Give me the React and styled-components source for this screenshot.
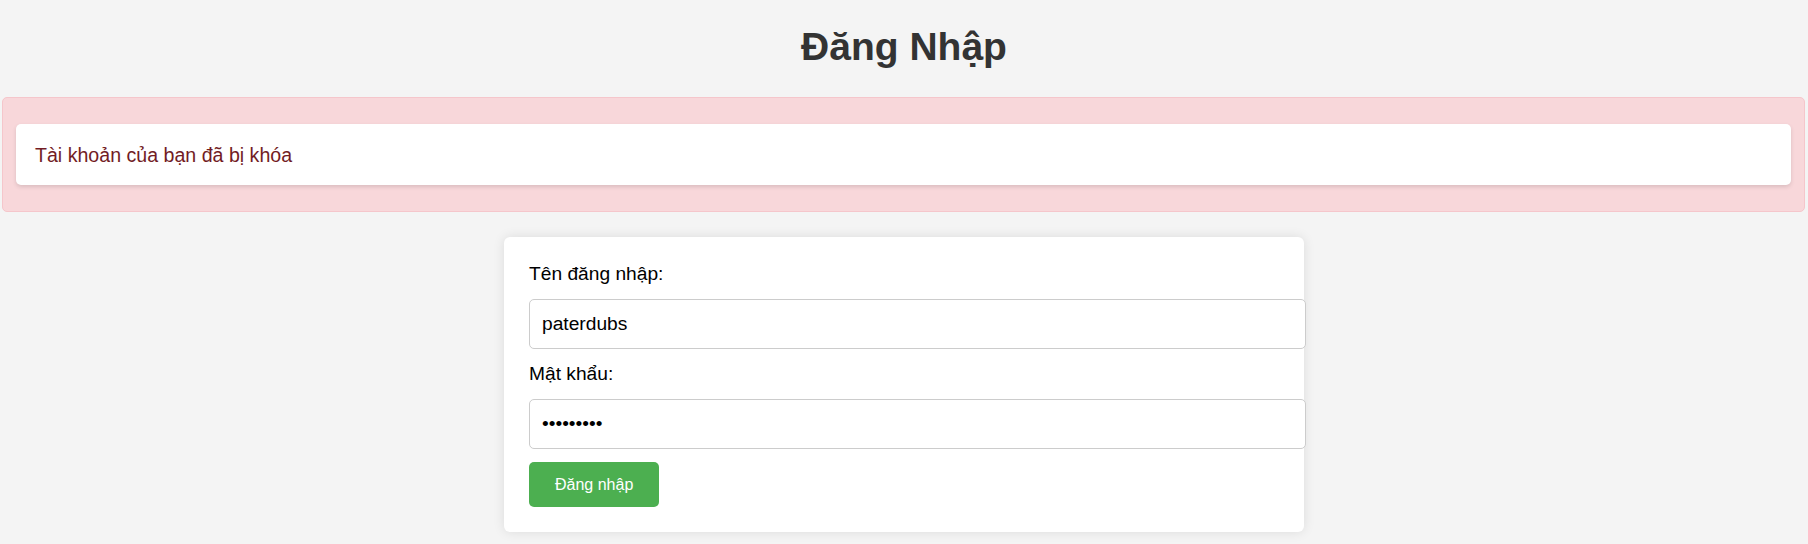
import React from "react";
import styled, { createGlobalStyle } from "styled-components";

const GlobalStyle = createGlobalStyle`
  html, body {
    margin: 0;
    padding: 0;
    background: #f4f4f4;
    font-family: "Liberation Sans", Arial, sans-serif;
  }
  * { box-sizing: content-box; }
`;

const Page = styled.div`
  display: flex;
  flex-direction: column;
  min-height: 544px;
`;

const Title = styled.h1`
  margin: 24px 0 28px;
  text-align: center;
  font-size: 39px;
  line-height: 45px;
  font-weight: 700;
  color: #333;
`;

const Alert = styled.div`
  margin: 0 3px 0 2px;
  padding: 26px 13px;
  background: #f8d7da;
  border: 1px solid #f5c6cb;
  border-radius: 5px;
`;

const AlertMessage = styled.div`
  padding: 20px 19px 19px;
  background: #fff;
  border-radius: 5px;
  box-shadow: 0 2px 4px rgba(0, 0, 0, 0.12);
  color: #721c24;
  font-size: 19.6px;
  line-height: 22px;
`;

const Card = styled.form`
  align-self: center;
  width: 751px;
  margin-top: 25px;
  padding: 26px 24px 25px 25px;
  background: #fff;
  border-radius: 6px;
  box-shadow: 0 0 12px rgba(0, 0, 0, 0.1);
  display: flex;
  flex-direction: column;
  align-items: flex-start;
`;

const Label = styled.label`
  display: block;
  font-size: 19.2px;
  line-height: 22px;
  color: #000;
  margin-bottom: 14px;
`;

const Input = styled.input`
  display: block;
  width: 100%;
  height: 48px;
  padding: 0 12px;
  margin: 0 0 ${(p) => (p.$last ? "13px" : "14px")};
  border: 1px solid #ccc;
  border-radius: 5px;
  background: #fff;
  font-family: "Liberation Sans", Arial, sans-serif;
  font-size: 19.2px;
  color: #000;
  outline: none;
`;

const Button = styled.button`
  height: 45px;
  padding: 0 26px;
  border: none;
  border-radius: 5px;
  background: #4caf50;
  color: #fff;
  font-family: "Liberation Sans", Arial, sans-serif;
  font-size: 16px;
  cursor: pointer;
`;

export default function App() {
  return (
    <>
      <GlobalStyle />
      <Page>
        <Title>Đăng Nhập</Title>
        <Alert>
          <AlertMessage>Tài khoản của bạn đã bị khóa</AlertMessage>
        </Alert>
        <Card onSubmit={(e) => e.preventDefault()}>
          <Label htmlFor="username">Tên đăng nhập:</Label>
          <Input id="username" type="text" defaultValue="paterdubs" />
          <Label htmlFor="password">Mật khẩu:</Label>
          <Input id="password" type="password" defaultValue="123456789" $last />
          <Button type="submit">Đăng nhập</Button>
        </Card>
      </Page>
    </>
  );
}
